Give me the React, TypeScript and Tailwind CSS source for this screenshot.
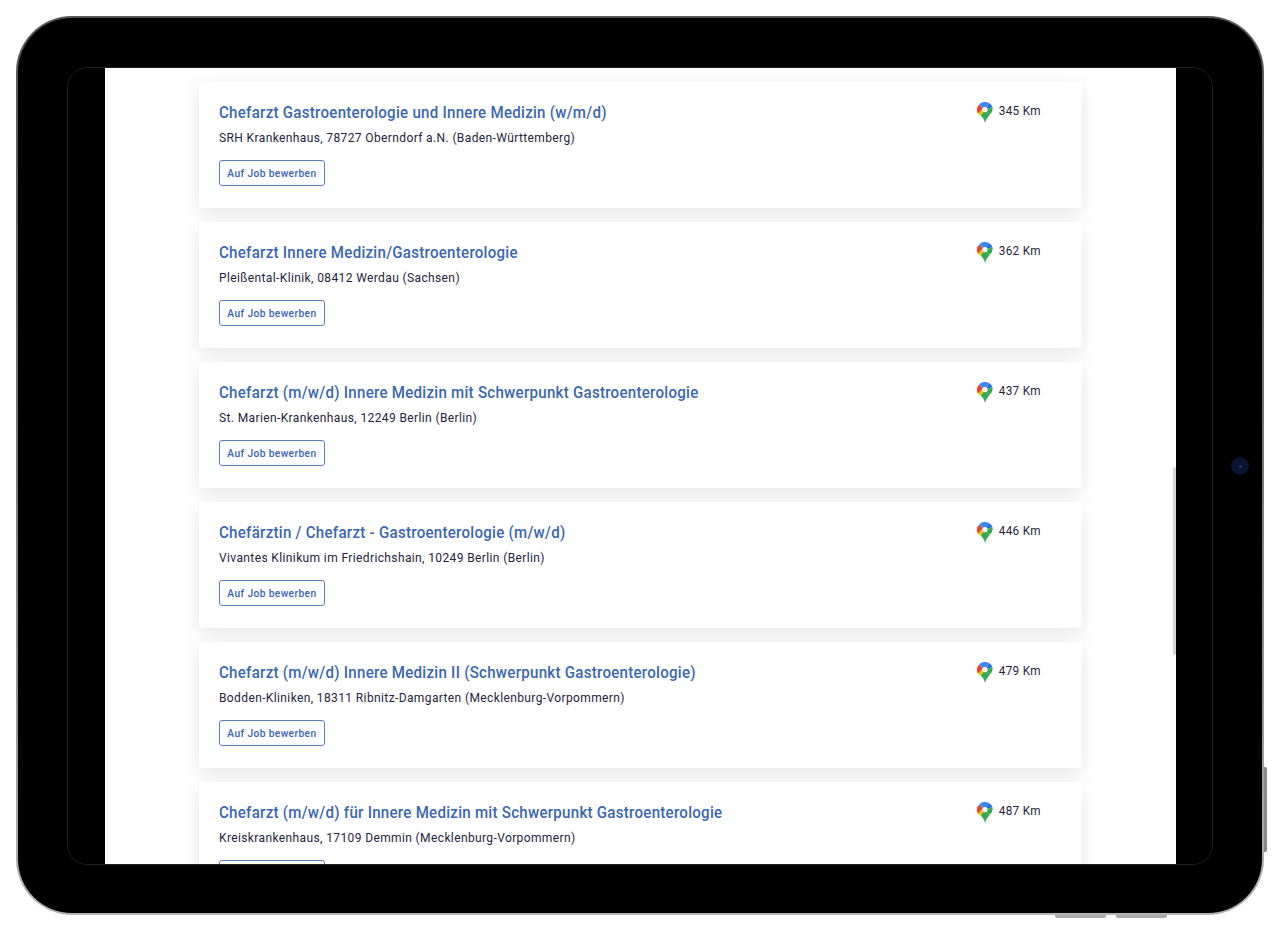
const jobs = [
  { title: "Chefarzt Gastroenterologie und Innere Medizin (w/m/d)", place: "SRH Krankenhaus, 78727 Oberndorf a.N. (Baden-Württemberg)", km: 345 },
  { title: "Chefarzt Innere Medizin/Gastroenterologie", place: "Pleißental-Klinik, 08412 Werdau (Sachsen)", km: 362 },
  { title: "Chefarzt (m/w/d) Innere Medizin mit Schwerpunkt Gastroenterologie", place: "St. Marien-Krankenhaus, 12249 Berlin (Berlin)", km: 437 },
  { title: "Chefärztin / Chefarzt - Gastroenterologie (m/w/d)", place: "Vivantes Klinikum im Friedrichshain, 10249 Berlin (Berlin)", km: 446 },
  { title: "Chefarzt (m/w/d) Innere Medizin II (Schwerpunkt Gastroenterologie)", place: "Bodden-Kliniken, 18311 Ribnitz-Damgarten (Mecklenburg-Vorpommern)", km: 479 },
  { title: "Chefarzt (m/w/d) für Innere Medizin mit Schwerpunkt Gastroenterologie", place: "Kreiskrankenhaus, 17109 Demmin (Mecklenburg-Vorpommern)", km: 487 },
];

function MapsPin() {
  return (
    <svg width="16" height="21" viewBox="0 0 16 21" className="shrink-0">
      {/* green tail */}
      <path d="M8 21C7.2 17.4 5.4 15.2 3.6 13.2L8 8L12.6 13C10.8 15.2 8.8 17.4 8 21Z" fill="#34a853" />
      {/* red left */}
      <path d="M2.3 2.4A8 8 0 0 0 1 11.6L8 8Z" fill="#ea4335" />
      {/* blue top */}
      <path d="M2.3 2.4A8 8 0 0 1 12 1.1L8 8Z" fill="#4285f4" />
      <path d="M12 1.1A8 8 0 0 1 15.4 5L8 8Z" fill="#1a73e8" />
      {/* green right */}
      <path d="M15.4 5A8 8 0 0 1 12.6 13L8 8Z" fill="#34a853" />
      {/* yellow lower left */}
      <path d="M1 11.6C1.6 12.3 2.6 12.9 3.6 13.6L9.5 7L6 6Z" fill="#fbbc04" />
      <circle cx="8" cy="7.6" r="2.7" fill="#fff8ee" />
    </svg>
  );
}

function JobCard({ title, place, km }: { title: string; place: string; km: number }) {
  return (
    <div className="mb-[14px] ml-[94px] flex h-[126px] w-[883px] shrink-0 justify-between rounded-[4px] bg-white pl-[20px] pr-[41px] pt-[19px] shadow-[0_5px_18px_rgba(0,0,0,0.1)]">
      <div>
        <h3 className="origin-left scale-x-[0.887] whitespace-nowrap text-[17px] leading-[22px] font-medium tracking-[0.3px] text-[#3a66b4]">{title}</h3>
        <p className="mt-[6px] origin-left scale-x-[0.925] whitespace-nowrap text-[13px] leading-[18px] tracking-[0.4px] text-[#1f2440]">{place}</p>
        <button className="mt-[13px] flex h-[26px] w-[106px] items-center justify-center rounded-[3px] border border-[#5a7fc0] pt-[2px] text-[11px] font-medium text-[#3a66b4]">
          <span className="scale-x-[0.93] whitespace-nowrap tracking-[0.4px]">Auf Job bewerben</span>
        </button>
      </div>
      <div className="flex h-[22px] items-center gap-[1px]">
        <MapsPin />
        <span className="mb-[3px] origin-right scale-x-[0.9] text-[13px] leading-[18px] tracking-[0.4px] text-[#1f2440]">{km} Km</span>
      </div>
    </div>
  );
}

export default function App() {
  return (
    <div className="h-[931px] w-[1280px] bg-white pl-[16px] pt-[16px] font-['Roboto',sans-serif]">
      <div className="relative h-[899px] w-[1248px] rounded-[56px] bg-gradient-to-b from-[#555555] via-[#777777] to-[#b4b4b4] p-[2px]">
        <div className="h-[895px] w-[1244px] rounded-[54px] bg-black pl-[87px] pt-[50px]">
          <div className="relative flex h-[796px] w-[1071px] flex-col overflow-hidden bg-white pt-[14px]">
            {jobs.map((job) => (
              <JobCard key={job.km} title={job.title} place={job.place} km={job.km} />
            ))}
            {/* scrollbar */}
            <div className="absolute left-[1068px] top-[399px] h-[188px] w-[3px] rounded-full bg-[#d4d4d4]" />
          </div>
        </div>
        {/* inner bezel line, only visible outside the screen */}
        <div className="pointer-events-none absolute left-[51px] top-[51px] h-[798px] w-[1146px] rounded-[20px] border border-[#1e1e1e]" />
        {/* camera */}
        <div className="absolute left-[1215px] top-[441px] flex h-[18px] w-[18px] items-center justify-center rounded-full bg-[#0c1530]">
          <div className="h-[3px] w-[3px] rounded-full bg-[#2c3658]" />
        </div>
        {/* side buttons */}
        <div className="absolute left-[1248px] top-[751px] h-[85px] w-[3px] rounded-r-[2px] bg-[#8a8a8a]" />
        <div className="absolute left-[1039px] top-[899px] h-[3px] w-[51px] rounded-b-[2px] bg-[#aaaaaa]" />
        <div className="absolute left-[1100px] top-[899px] h-[3px] w-[51px] rounded-b-[2px] bg-[#aaaaaa]" />
      </div>
    </div>
  );
}
